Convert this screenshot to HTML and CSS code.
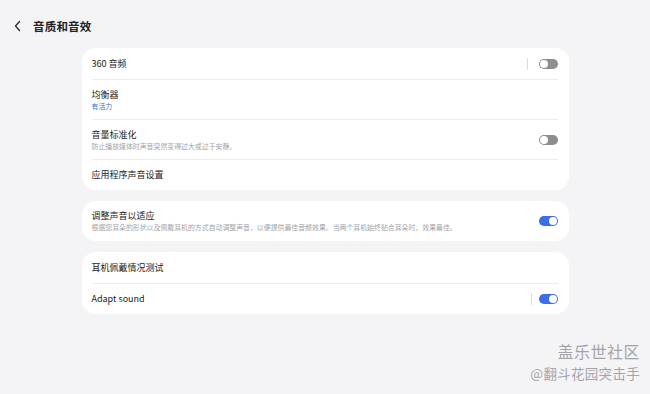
FILE: index.html
```html
<!DOCTYPE html>
<html lang="zh-CN">
	<head>
		<meta charset="UTF-8">
		<title>音质和音效</title>
		<link rel="stylesheet" href="styles.css">
	</head>
	<body>
		<div class="page">
			<div class="header">
				<a href="javascript:;" class="back">
					<svg width="10" height="12" viewBox="0 0 10 12"><path d="M6.5 1.5 L2.5 6 L6.5 10.5" fill="none" stroke="#222" stroke-width="1.2" stroke-linecap="round" stroke-linejoin="round"/></svg>
				</a>
				<div class="title">音质和音效</div>
			</div>
			<div class="list">
				<div class="card">
					<div class="row">
						<div class="text"><div class="name">360 音频</div></div>
						<span class="sep"></span>
						<span class="switch"></span>
					</div>
					<div class="row two">
						<div class="text">
							<div class="name">均衡器</div>
							<div class="sub blue">有活力</div>
						</div>
					</div>
					<div class="row two">
						<div class="text">
							<div class="name">音量标准化</div>
							<div class="sub">防止播放媒体时声音突然变得过大或过于安静。</div>
						</div>
						<span class="switch"></span>
					</div>
					<div class="row">
						<div class="text"><div class="name">应用程序声音设置</div></div>
					</div>
				</div>
				<div class="card">
					<div class="row two">
						<div class="text">
							<div class="name">调整声音以适应</div>
							<div class="sub">根据您耳朵的形状以及佩戴耳机的方式自动调整声音，以便提供最佳音频效果。当两个耳机始终贴合耳朵时，效果最佳。</div>
						</div>
						<span class="switch on"></span>
					</div>
				</div>
				<div class="card">
					<div class="row">
						<div class="text"><div class="name">耳机佩戴情况测试</div></div>
					</div>
					<div class="row">
						<div class="text"><div class="name">Adapt sound</div></div>
						<span class="sep near"></span>
						<span class="switch on"></span>
					</div>
				</div>
			</div>
			<div class="mark">
				<div class="mark-big">盖乐世社区</div>
				<div class="mark-small">@翻斗花园突击手</div>
			</div>
		</div>
	</body>
</html>
```

FILE: styles.css
```css
body {
	margin: 0;
	background: #f4f4f7;
	font-family: "Noto Sans CJK SC", "Noto Sans", sans-serif;
	color: #222;
}

a {
	text-decoration: none;
}

.page {
	position: relative;
	width: 650px;
	height: 394px;
	overflow: hidden;
}

.header {
	height: 48px;
	display: flex;
	align-items: center;
	padding: 4px 0 0 13px;
	box-sizing: border-box;
}

.back {
	display: flex;
	width: 12px;
	height: 12px;
	align-items: center;
	margin-right: 8px;
}

.title {
	font-size: 11.5px;
	font-weight: 700;
	letter-spacing: 0.2px;
}

.list {
	width: 487px;
	margin: 0 auto;
	display: flex;
	flex-direction: column;
	gap: 11px;
}

.card {
	background: #fff;
	border-radius: 14px;
	padding: 0 11px 0 10px;
}

.row {
	min-height: 31px;
	display: flex;
	align-items: center;
	box-sizing: border-box;
}

.row + .row {
	border-top: 1px solid #ececee;
}

.row.two {
	min-height: 40px;
}

.text {
	flex: 1;
}

.name {
	font-size: 9px;
	line-height: 12px;
	color: #222;
}

.sub {
	font-size: 6.9px;
	line-height: 9px;
	margin-top: 1px;
	color: #a2a2a5;
}

.sub.blue {
	color: #3b6fc4;
}

.sep {
	width: 1px;
	height: 12px;
	background: #dcdcdf;
	margin-right: 11px;
}

.sep.near {
	margin-right: 7px;
}

.switch {
	position: relative;
	width: 19px;
	height: 10px;
	border-radius: 5px;
	background: #8e8e92;
	box-sizing: border-box;
}

.switch::after {
	content: "";
	position: absolute;
	left: 1px;
	top: 1px;
	width: 8px;
	height: 8px;
	border-radius: 50%;
	background: #fff;
}

.switch.on {
	background: #3b6ee6;
}

.switch.on::after {
	left: 10px;
}

.mark {
	position: absolute;
	right: 10px;
	top: 340px;
	text-align: right;
	color: #a4a4a8;
}

.mark-big {
	font-size: 16px;
	line-height: 23px;
	letter-spacing: 0.5px;
}

.mark-small {
	font-size: 13.5px;
	line-height: 20px;
	letter-spacing: 0.3px;
}
```
